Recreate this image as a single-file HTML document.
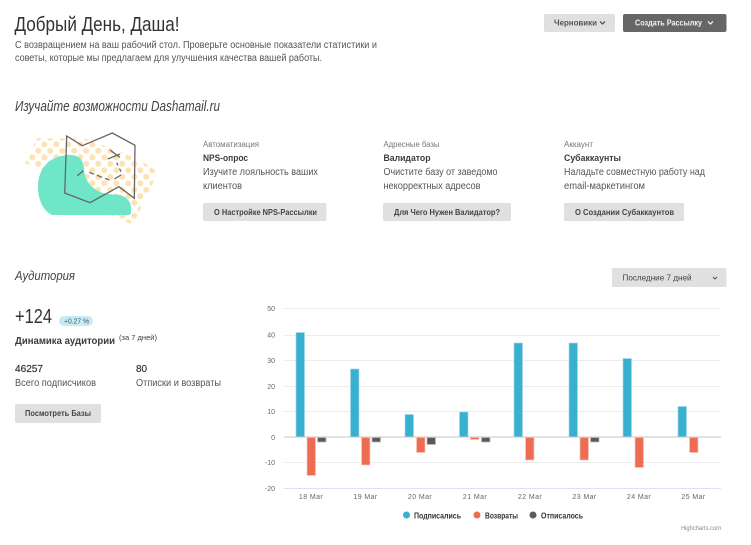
<!DOCTYPE html>
<html><head><meta charset="utf-8"><style>
html,body{margin:0;padding:0;background:#fff;width:751px;height:545px;overflow:hidden}
svg{display:block}
text{font-family:"Liberation Sans","DejaVu Sans",sans-serif;fill:#3c3c3c;font-size:10px}
.d{fill:#555;font-size:10px}
.b{font-weight:bold}
.ax{fill:#666;font-size:7px}
.btn{fill:#e0e0e0}
</style></head><body>
<svg width="751" height="545" viewBox="0 0 751 545" xmlns="http://www.w3.org/2000/svg">
<defs>
<pattern id="dots" width="12" height="13" patternUnits="userSpaceOnUse" x="41.300" y="141.300">
<circle cx="3" cy="3" r="3" fill="#fde3b4"/><circle cx="9" cy="9.500" r="3" fill="#fde3b4"/>
</pattern>
</defs>
<text x="14.500" y="31" style="font-size:20px;fill:#333" textLength="165" lengthAdjust="spacingAndGlyphs">Добрый День, Даша!</text>
<text x="15" y="48" class="d" textLength="362" lengthAdjust="spacingAndGlyphs">С возвращением на ваш рабочий стол. Проверьте основные показатели статистики и</text>
<text x="15" y="61" class="d" textLength="307" lengthAdjust="spacingAndGlyphs">советы, которые мы предлагаем для улучшения качества вашей работы.</text>
<text x="15" y="111" style="font-size:15px;font-style:italic;fill:#444" textLength="205" lengthAdjust="spacingAndGlyphs">Изучайте возможности Dashamail.ru</text>

<rect x="544" y="14" width="71" height="18" rx="2" class="btn"/>
<text x="554" y="25.500" class="b" style="font-size:8px;fill:#555" textLength="43" lengthAdjust="spacingAndGlyphs">Черновики</text>
<path d="M600 21.500l2.500 2.500 2.500-2.500" fill="none" stroke="#555" stroke-width="1.300"/>
<rect x="623" y="14" width="103.500" height="18" rx="2" fill="#666"/>
<text x="635" y="25.500" class="b" style="font-size:8px;fill:#f4f4f4" textLength="67" lengthAdjust="spacingAndGlyphs">Создать Рассылку</text>
<path d="M708 21.500l2.500 2.500 2.500-2.500" fill="none" stroke="#f0f0f0" stroke-width="1.300"/>

<!-- illustration -->
<polygon points="37,138 87,139 140,160 158,172 133,225 112,216 60,180 25,163" fill="url(#dots)"/>
<path d="M70 155C79 155 84 160 84 170C85 180 90 187 100 192C108 195 113 194 120 195C127 197 131 202 131 208L131 212C131 214 130 215 128 215L52 215C42 210 38 198 38 187C38 168 50 155 70 155Z" fill="#6fe6c7"/>
<path d="M66.700 136L82.300 145.700L112.300 133L135 145.300L134.300 198.300L119 186.700L90 202.700L64.700 193Z" fill="none" stroke="#666" stroke-width="1.300"/>
<path d="M107.700 159L120 154M110 150L120 157.300" stroke="#666" stroke-width="1.300" fill="none"/>
<path d="M77.300 175.700L83.300 170.700M89.300 172.300L94 174.300M97 175.300L102 177.300M105 178.300L109.300 180M114.300 179L121 175M121 171.700L119.500 168.500M118 165.500L116.700 162.700" fill="none" stroke="#666" stroke-width="1.300"/>

<!-- cards -->
<text x="203" y="147" style="font-size:8px;fill:#777" textLength="56" lengthAdjust="spacingAndGlyphs">Автоматизация</text>
<text x="203" y="161" class="b" style="font-size:9.500px" textLength="45" lengthAdjust="spacingAndGlyphs">NPS-опрос</text>
<text x="203" y="175" class="d" textLength="115" lengthAdjust="spacingAndGlyphs">Изучите лояльность ваших</text>
<text x="203" y="189" class="d" textLength="39" lengthAdjust="spacingAndGlyphs">клиентов</text>
<rect x="203" y="203" width="123.500" height="18" rx="1.500" class="btn"/>
<text x="214" y="214.800" class="b" style="font-size:8px;fill:#444" textLength="103" lengthAdjust="spacingAndGlyphs">О Настройке NPS-Рассылки</text>

<text x="383.500" y="147" style="font-size:8px;fill:#777" textLength="56" lengthAdjust="spacingAndGlyphs">Адресные базы</text>
<text x="383.500" y="161" class="b" style="font-size:9.500px" textLength="47" lengthAdjust="spacingAndGlyphs">Валидатор</text>
<text x="383.500" y="175" class="d" textLength="114" lengthAdjust="spacingAndGlyphs">Очистите базу от заведомо</text>
<text x="383.500" y="189" class="d" textLength="97" lengthAdjust="spacingAndGlyphs">некорректных адресов</text>
<rect x="383" y="203" width="128" height="18" rx="1.500" class="btn"/>
<text x="394" y="214.800" class="b" style="font-size:8px;fill:#444" textLength="106" lengthAdjust="spacingAndGlyphs">Для Чего Нужен Валидатор?</text>

<text x="564" y="147" style="font-size:8px;fill:#777" textLength="29" lengthAdjust="spacingAndGlyphs">Аккаунт</text>
<text x="564" y="161" class="b" style="font-size:9.500px" textLength="57" lengthAdjust="spacingAndGlyphs">Субаккаунты</text>
<text x="564" y="175" class="d" textLength="141" lengthAdjust="spacingAndGlyphs">Наладьте совместную работу над</text>
<text x="564" y="189" class="d" textLength="81" lengthAdjust="spacingAndGlyphs">email-маркетингом</text>
<rect x="564" y="203" width="120" height="18" rx="1.500" class="btn"/>
<text x="575" y="214.800" class="b" style="font-size:8px;fill:#444" textLength="99" lengthAdjust="spacingAndGlyphs">О Создании Субаккаунтов</text>

<!-- audience -->
<text x="15" y="280" style="font-size:13px;font-style:italic;fill:#444" textLength="60" lengthAdjust="spacingAndGlyphs">Аудитория</text>
<rect x="612" y="268" width="114.500" height="19" rx="1.500" class="btn"/>
<text x="622.500" y="280.500" style="font-size:8.500px;fill:#444" textLength="69" lengthAdjust="spacingAndGlyphs">Последние 7 дней</text>
<path d="M713 277l2 2 2-2" fill="none" stroke="#555" stroke-width="1.100"/>

<text x="15" y="323" style="font-size:20px;fill:#333" textLength="37" lengthAdjust="spacingAndGlyphs">+124</text>
<rect x="59" y="316" width="34" height="10" rx="5" fill="#c6ebf5"/>
<text x="64" y="323.500" style="font-size:7px;fill:#456" textLength="25" lengthAdjust="spacingAndGlyphs">+0.27 %</text>
<text x="15" y="344" class="b" style="font-size:10px" textLength="100" lengthAdjust="spacingAndGlyphs">Динамика аудитории</text>
<text x="119" y="340" style="font-size:7.500px" textLength="38" lengthAdjust="spacingAndGlyphs">(за 7 дней)</text>
<text x="15" y="372" style="font-size:10.500px;fill:#333;stroke:#333;stroke-width:.2px" textLength="28" lengthAdjust="spacingAndGlyphs">46257</text>
<text x="136" y="372" style="font-size:10.500px;fill:#333;stroke:#333;stroke-width:.2px" textLength="11" lengthAdjust="spacingAndGlyphs">80</text>
<text x="15" y="386" class="d" textLength="81" lengthAdjust="spacingAndGlyphs">Всего подписчиков</text>
<text x="136" y="386" class="d" textLength="85" lengthAdjust="spacingAndGlyphs">Отписки и возвраты</text>
<rect x="15" y="404" width="86" height="19" rx="1.500" class="btn"/>
<text x="25" y="416" class="b" style="font-size:8px;fill:#444" textLength="66" lengthAdjust="spacingAndGlyphs">Посмотреть Базы</text>

<!-- chart -->
<g stroke="#ececec" stroke-width="1">
<path d="M284 308.500H721M284 335.500H721M284 360.500H721M284 386.500H721M284 411.500H721M284 462.500H721"/>
</g>
<path d="M284 488.500H721" stroke="#dfe0f0"/>
<g text-anchor="end">
<text x="275" y="311" class="ax">50</text><text x="275" y="337.500" class="ax">40</text>
<text x="275" y="363" class="ax">30</text><text x="275" y="389" class="ax">20</text>
<text x="275" y="414" class="ax">10</text><text x="275" y="440" class="ax">0</text>
<text x="275" y="465" class="ax">-10</text><text x="275" y="491" class="ax">-20</text>
</g>
<g stroke-width="0.700">
<g fill="#38b0d0" stroke="#a5dbe9">
<rect x="296" y="332.500" width="8.500" height="104.500"/>
<rect x="350.500" y="369" width="8.500" height="68"/>
<rect x="405" y="414.500" width="8.500" height="22.500"/>
<rect x="459.500" y="412" width="8.500" height="25"/>
<rect x="514" y="343" width="8.500" height="94"/>
<rect x="569" y="343" width="8.500" height="94"/>
<rect x="623" y="358.500" width="8.500" height="78.500"/>
<rect x="678" y="406.500" width="8.500" height="30.500"/>
</g>
<g fill="#ee6c52" stroke="#f8c8bb">
<rect x="307" y="437.500" width="8.500" height="38"/>
<rect x="361.500" y="437.500" width="8.500" height="27.500"/>
<rect x="416.500" y="437.500" width="8.500" height="15"/>
<rect x="470.500" y="437.500" width="8.500" height="2"/>
<rect x="525.500" y="437.500" width="8.500" height="22.500"/>
<rect x="580" y="437.500" width="8.500" height="22.500"/>
<rect x="635" y="437.500" width="8.500" height="30"/>
<rect x="689.500" y="437.500" width="8.500" height="15"/>
</g>
<g fill="#5a5a5a" stroke="#bdbdbd">
<rect x="317.500" y="437.500" width="8.500" height="4.500"/>
<rect x="372" y="437.500" width="8.500" height="4.500"/>
<rect x="427" y="437.500" width="8.500" height="7"/>
<rect x="481.500" y="437.500" width="8.500" height="4.500"/>
<rect x="590.500" y="437.500" width="8.500" height="4.500"/>
</g>
</g>
<path d="M284 437H721" stroke="#c4c4c4" stroke-width="1"/>
<g text-anchor="middle">
<text x="311" y="499" class="ax" style="letter-spacing:.4px">18 Mar</text><text x="365.500" y="499" class="ax" style="letter-spacing:.4px">19 Mar</text>
<text x="420" y="499" class="ax" style="letter-spacing:.4px">20 Mar</text><text x="475" y="499" class="ax" style="letter-spacing:.4px">21 Mar</text>
<text x="530" y="499" class="ax" style="letter-spacing:.4px">22 Mar</text><text x="584.500" y="499" class="ax" style="letter-spacing:.4px">23 Mar</text>
<text x="639" y="499" class="ax" style="letter-spacing:.4px">24 Mar</text><text x="693.500" y="499" class="ax" style="letter-spacing:.4px">25 Mar</text>
</g>
<circle cx="406.500" cy="515" r="3.500" fill="#38b0d0"/>
<text x="414" y="518.500" class="b" style="font-size:8px;fill:#333" textLength="47" lengthAdjust="spacingAndGlyphs">Подписались</text>
<circle cx="477" cy="515" r="3.500" fill="#ee6c52"/>
<text x="485" y="518.500" class="b" style="font-size:8px;fill:#333" textLength="33" lengthAdjust="spacingAndGlyphs">Возвраты</text>
<circle cx="533" cy="515" r="3.500" fill="#5a5a5a"/>
<text x="541" y="518.500" class="b" style="font-size:8px;fill:#333" textLength="42" lengthAdjust="spacingAndGlyphs">Отписалось</text>
<text x="681" y="530" style="font-size:6px;fill:#888" textLength="40" lengthAdjust="spacingAndGlyphs">Highcharts.com</text>
</svg>
</body></html>
